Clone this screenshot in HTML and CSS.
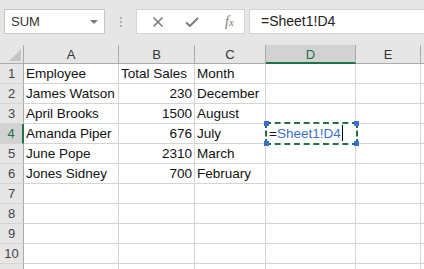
FILE: index.html
```html
<!DOCTYPE html>
<html>
<head>
<meta charset="utf-8">
<title>Sheet</title>
<link rel="stylesheet" href="styles.css">
</head>
<body>

<div class="toolbar">
	<div class="namebox">
		<span class="nametext">SUM</span>
		<svg class="dropdown" width="8" height="5" viewBox="0 0 8 5"><path d="M0 0H8L4 4Z" fill="#7a7a7a"/></svg>
	</div>
	<div class="grip"><span></span><span></span><span></span></div>
	<div class="fbuttons">
		<svg class="fbtn" width="12" height="12" viewBox="0 0 12 12"><path d="M1.5 1.5L10.5 10.5M10.5 1.5L1.5 10.5" stroke="#7a7a7a" stroke-width="1.6" fill="none"/></svg>
		<svg class="fbtn" width="14" height="12" viewBox="0 0 14 12"><path d="M1 6.5L5 10L13 2" stroke="#7a7a7a" stroke-width="2" fill="none"/></svg>
		<span class="fx">f<span class="fxsub">x</span></span>
	</div>
	<div class="formula">=Sheet1!D4</div>
</div>

<div class="sheet">
	<div class="corner"><svg width="12" height="12" viewBox="0 0 12 12"><path d="M12 0V12H0Z" fill="#c6c6c6"/></svg></div>
	<div class="colhead">A</div>
	<div class="colhead">B</div>
	<div class="colhead">C</div>
	<div class="colhead sel">D</div>
	<div class="colhead">E</div>
	<div class="colhead last"></div>

	<div class="rowhead">1</div>
	<div class="cell">Employee</div>
	<div class="cell">Total Sales</div>
	<div class="cell">Month</div>
	<div class="cell"></div>
	<div class="cell"></div>
	<div class="cell last"></div>

	<div class="rowhead">2</div>
	<div class="cell">James Watson</div>
	<div class="cell num">230</div>
	<div class="cell">December</div>
	<div class="cell"></div>
	<div class="cell"></div>
	<div class="cell last"></div>

	<div class="rowhead">3</div>
	<div class="cell">April Brooks</div>
	<div class="cell num">1500</div>
	<div class="cell">August</div>
	<div class="cell"></div>
	<div class="cell"></div>
	<div class="cell last"></div>

	<div class="rowhead sel">4</div>
	<div class="cell">Amanda Piper</div>
	<div class="cell num">676</div>
	<div class="cell">July</div>
	<div class="cell editing">
		<div class="editbox">
			<span class="eq">=</span><span class="ref">Sheet1!D4</span><span class="caret"></span>
			<span class="handle tl"></span><span class="handle tr"></span>
			<span class="handle bl"></span><span class="handle br"></span>
		</div>
	</div>
	<div class="cell"></div>
	<div class="cell last"></div>

	<div class="rowhead">5</div>
	<div class="cell">June Pope</div>
	<div class="cell num">2310</div>
	<div class="cell">March</div>
	<div class="cell"></div>
	<div class="cell"></div>
	<div class="cell last"></div>

	<div class="rowhead">6</div>
	<div class="cell">Jones Sidney</div>
	<div class="cell num">700</div>
	<div class="cell">February</div>
	<div class="cell"></div>
	<div class="cell"></div>
	<div class="cell last"></div>

	<div class="rowhead">7</div>
	<div class="cell"></div><div class="cell"></div><div class="cell"></div><div class="cell"></div><div class="cell"></div><div class="cell last"></div>

	<div class="rowhead">8</div>
	<div class="cell"></div><div class="cell"></div><div class="cell"></div><div class="cell"></div><div class="cell"></div><div class="cell last"></div>

	<div class="rowhead">9</div>
	<div class="cell"></div><div class="cell"></div><div class="cell"></div><div class="cell"></div><div class="cell"></div><div class="cell last"></div>

	<div class="rowhead">10</div>
	<div class="cell"></div><div class="cell"></div><div class="cell"></div><div class="cell"></div><div class="cell"></div><div class="cell last"></div>

	<div class="rowhead"></div>
	<div class="cell"></div><div class="cell"></div><div class="cell"></div><div class="cell"></div><div class="cell"></div><div class="cell last"></div>
</div>

</body>
</html>
```

FILE: styles.css
```css
body {
	margin: 0;
	background-color: #e6e6e6;
	font-family: "Liberation Sans", Arial, sans-serif;
	overflow: hidden;
	width: 424px;
	height: 269px;
}
.toolbar {
	display: flex;
	height: 45px;
	box-sizing: border-box;
	padding: 9px 0 0 4px;
}
.namebox {
	width: 101px;
	height: 25px;
	box-sizing: border-box;
	background-color: #ffffff;
	border: 1px solid #c6c6c6;
	display: flex;
	align-items: center;
	justify-content: space-between;
	padding: 0 6px 0 6px;
}
.nametext {
	font-size: 13px;
	color: #333333;
}
.dropdown {
	margin-top: 1px;
}
.grip {
	width: 31px;
	display: flex;
	flex-direction: column;
	align-items: center;
	justify-content: center;
	gap: 2px;
	height: 25px;
}
.grip span {
	width: 2px;
	height: 2px;
	background-color: #b0b0b0;
}
.fbuttons {
	width: 109px;
	height: 25px;
	box-sizing: border-box;
	background-color: #ffffff;
	border: 1px solid #d4d4d4;
	display: flex;
	align-items: center;
	padding-left: 15px;
}
.fbtn {
	margin-right: 21px;
}
.fbtn + .fbtn {
	margin-right: 26px;
}
.fx {
	font-family: "Liberation Serif", "Times New Roman", serif;
	font-style: italic;
	font-size: 14px;
	color: #7a7a7a;
}
.fxsub {
	font-size: 11px;
}
.formula {
	flex: 1;
	margin-left: 4px;
	margin-right: -2px;
	height: 25px;
	box-sizing: border-box;
	background-color: #ffffff;
	border: 1px solid #d4d4d4;
	padding-left: 11px;
	font-size: 14px;
	line-height: 23px;
	color: #222222;
}
.sheet {
	display: grid;
	grid-template-columns: 24px 95px 76px 71px 90px 65px 1fr;
	grid-template-rows: 19px repeat(11, 20px);
	background-color: #ffffff;
}
.corner {
	background-color: #e6e6e6;
	border-right: 1px solid #ababab;
	border-bottom: 1px solid #ababab;
	display: flex;
	align-items: flex-end;
	justify-content: flex-end;
	padding: 0 2px 2px 0;
}
.colhead {
	background-color: #e6e6e6;
	border-right: 1px solid #ababab;
	border-bottom: 1px solid #ababab;
	text-align: center;
	font-size: 13px;
	line-height: 20px;
	color: #333333;
}
.colhead.sel {
	background-color: #d2d2d2;
	color: #217346;
	border-bottom: 2px solid #217346;
	line-height: 19px;
}
.colhead.last {
	border-right: none;
}
.rowhead {
	background-color: #e6e6e6;
	border-right: 1px solid #ababab;
	border-bottom: 1px solid #d4d4d4;
	text-align: center;
	font-size: 13px;
	line-height: 20px;
	color: #444444;
}
.rowhead.sel {
	background-color: #d2d2d2;
	color: #217346;
	border-right: 2px solid #217346;
}
.cell {
	border-right: 1px solid #d4d4d4;
	border-bottom: 1px solid #d4d4d4;
	font-size: 13.5px;
	line-height: 20px;
	padding: 0 2px;
	color: #111111;
	white-space: nowrap;
	overflow: visible;
	position: relative;
}
.cell.num {
	text-align: right;
}
.cell.last {
	border-right: none;
}
.cell.editing {
	padding: 0;
}
.editbox {
	position: absolute;
	left: -1px;
	top: -2px;
	width: 93px;
	height: 23px;
	box-sizing: border-box;
	border: 2px dashed #217346;
	background-color: #ffffff;
	font-size: 13.5px;
	line-height: 19px;
	padding-left: 2px;
	z-index: 2;
}
.eq {
	color: #111111;
}
.ref {
	color: #3b6fd1;
}
.caret {
	display: inline-block;
	width: 1px;
	height: 16px;
	background-color: #000000;
	vertical-align: -3px;
	margin-left: 1px;
}
.handle {
	position: absolute;
	width: 5px;
	height: 5px;
	background-color: #3b6fd1;
}
.handle.tl { left: -3px; top: -3px; }
.handle.tr { right: -3px; top: -3px; }
.handle.bl { left: -3px; bottom: -3px; }
.handle.br { right: -3px; bottom: -3px; }
```
